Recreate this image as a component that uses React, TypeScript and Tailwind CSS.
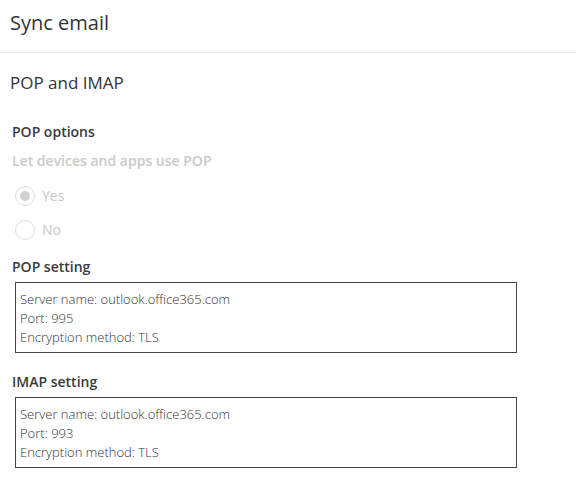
const font = { fontFamily: '"Open Sans", "Noto Sans", sans-serif' };

type Setting = { label: string; server: string; port: string; encryption: string };

const settings: Setting[] = [
  { label: "POP setting", server: "outlook.office365.com", port: "995", encryption: "TLS" },
  { label: "IMAP setting", server: "outlook.office365.com", port: "993", encryption: "TLS" },
];

const Radio = ({ label, checked }: { label: string; checked?: boolean }) => (
  <div className="flex h-[34px] items-center gap-[7px] pl-[15px]">
    <span className="flex h-[20px] w-[20px] items-center justify-center rounded-full border border-[#dcdcdc]">
      {checked && <span className="h-[10px] w-[10px] rounded-full bg-[#d2d2d2]" />}
    </span>
    <span className="text-[14px] leading-[20px] text-[#c8c8c8]">{label}</span>
  </div>
);

export default function App() {
  return (
    <div className="min-h-screen bg-white text-[#333]" style={font}>
      <header className="h-[53px] border-b border-[#eaeaea] px-[10px] pt-[9px]">
        <h1 className="text-[20px] leading-[28px] font-normal">Sync email</h1>
      </header>

      <main className="px-[10px] pt-[18px]">
        <h2 className="text-[17px] leading-[24px]">POP and IMAP</h2>

        <div className="mt-[27px] pl-[2px]">
          <h3 className="text-[14px] leading-[20px] font-semibold text-[#3a3a3a]">POP options</h3>
          <p className="mt-[9px] text-[14px] leading-[20px] font-semibold text-[#cacaca]">
            Let devices and apps use POP
          </p>
        </div>

        <div className="mt-[8px] -ml-[10px]">
          <Radio label="Yes" checked />
          <Radio label="No" />
        </div>

        {settings.map((s, i) => (
          <section key={s.label} className={i === 0 ? "mt-[10px]" : "mt-[19px]"}>
            <h3 className="pl-[2px] text-[14px] leading-[20px] font-semibold text-[#3a3a3a]">{s.label}</h3>
            <div className="mt-[5px] ml-[5px] h-[71px] w-[502px] border border-[#444] px-[4px] pt-[7px] text-[13px] leading-[19px] font-light">
              <div>Server name: {s.server}</div>
              <div>Port: {s.port}</div>
              <div>Encryption method: {s.encryption}</div>
            </div>
          </section>
        ))}
      </main>
    </div>
  );
}
